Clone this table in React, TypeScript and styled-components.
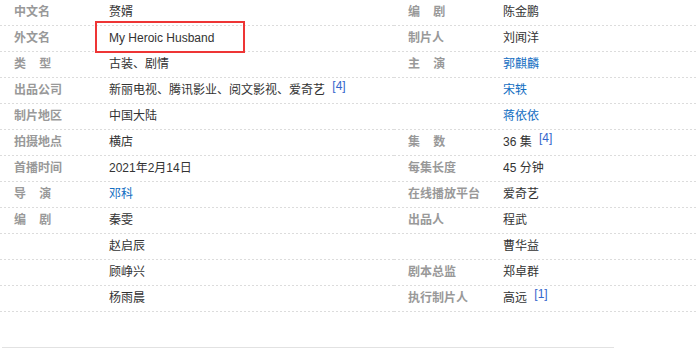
import React from "react";
import styled, { createGlobalStyle } from "styled-components";

const Global = createGlobalStyle`
  html, body { margin: 0; padding: 0; background: #fff; }
  body { font-family: "Liberation Sans", Arial, "Noto Sans CJK SC", sans-serif; font-size: 12px; color: #333; }
`;

const Info = styled.div`
  display: flex;
  width: 696px;
`;

const Block = styled.dl<{ $w?: number }>`
  margin: 0;
  ${(p) => (p.$w ? `width: ${p.$w}px; flex: none;` : "flex: 1;")}
`;

const Row = styled.div`
  display: flex;
  height: 25px;
  line-height: 25px;
  padding-bottom: 1px;
  background-image: linear-gradient(to right, #dcdcdc 50%, transparent 50%);
  background-size: 4px 1px;
  background-repeat: repeat-x;
  background-position: left bottom;
`;

const Label = styled.dt`
  width: 95px;
  padding-left: 14px;
  flex: none;
  font-weight: bold;
  color: #999;
  white-space: pre;
`;

const Value = styled.dd`
  margin: 0;
  flex: 1;
  color: #333;
  position: relative;
  white-space: nowrap;
`;

const Link = styled.a`
  color: #136ec2;
  text-decoration: none;
`;

const Sup = styled.sup`
  font-size: 12px;
  line-height: 0;
  vertical-align: 4px;
  margin-left: 4px;
  color: #3366cc;
`;

const Highlight = styled.span`
  position: absolute;
  left: -14px;
  top: -5px;
  width: 146px;
  height: 28px;
  border: 2px solid #ee3535;
  pointer-events: none;
`;

const Footer = styled.div`
  margin: 35px 0 0 2px;
  width: 612px;
  height: 0;
  border-top: 1px solid #e2e2e2;
`;

type Item = { label?: string; value: React.ReactNode };

const N = "\u00a0\u00a0\u00a0\u00a0";

const left: Item[] = [
  { label: "中文名", value: "赘婿" },
  {
    label: "外文名",
    value: (
      <>
        My Heroic Husband
        <Highlight />
      </>
    ),
  },
  { label: `类${N}型`, value: "古装、剧情" },
  {
    label: "出品公司",
    value: (
      <>
        新丽电视、腾讯影业、阅文影视、爱奇艺 <Sup>[4]</Sup>
      </>
    ),
  },
  { label: "制片地区", value: "中国大陆" },
  { label: "拍摄地点", value: "横店" },
  { label: "首播时间", value: "2021年2月14日" },
  { label: `导${N}演`, value: <Link>邓科</Link> },
  { label: `编${N}剧`, value: "秦雯" },
  { value: "赵启辰" },
  { value: "顾峥兴" },
  { value: "杨雨晨" },
];

const right: Item[] = [
  { label: `编${N}剧`, value: "陈金鹏" },
  { label: "制片人", value: "刘闻洋" },
  { label: `主${N}演`, value: <Link>郭麒麟</Link> },
  { value: <Link>宋轶</Link> },
  { value: <Link>蒋依依</Link> },
  {
    label: `集${N}数`,
    value: (
      <>
        36 集 <Sup>[4]</Sup>
      </>
    ),
  },
  { label: "每集长度", value: "45 分钟" },
  { label: "在线播放平台", value: "爱奇艺" },
  { label: "出品人", value: "程武" },
  { value: "曹华益" },
  { label: "剧本总监", value: "郑卓群" },
  {
    label: "执行制片人",
    value: (
      <>
        高远 <Sup>[1]</Sup>
      </>
    ),
  },
];

const Column = ({ items, w }: { items: Item[]; w?: number }) => (
  <Block $w={w}>
    {items.map((it, i) => (
      <Row key={i}>
        <Label>{it.label ?? ""}</Label>
        <Value>{it.value}</Value>
      </Row>
    ))}
  </Block>
);

export default function App() {
  return (
    <>
      <Global />
      <Info>
        <Column items={left} w={394} />
        <Column items={right} />
      </Info>
      <Footer />
    </>
  );
}
